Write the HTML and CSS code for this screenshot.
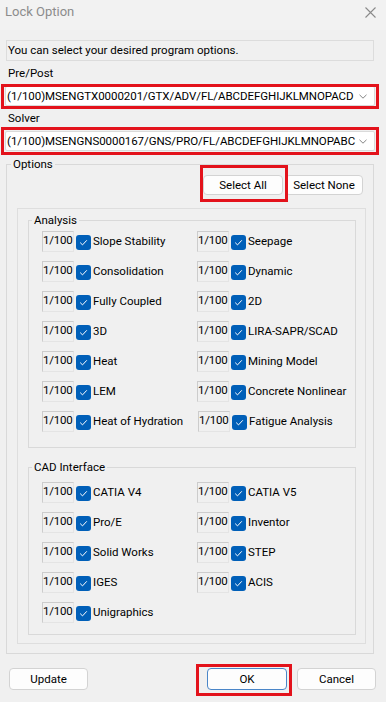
FILE: index.html
```html
<!DOCTYPE html>
<html lang="en">
<head>
<meta charset="utf-8">
<title>Lock Option</title>
<link rel="stylesheet" href="styles.css">
</head>
<body>
<div class="titlebar">
  <span class="title">Lock Option</span>
  <svg class="close" width="11" height="11" viewBox="0 0 11 11"><path d="M0.5 0.5 L10.5 10.5 M10.5 0.5 L0.5 10.5" stroke="#8a8a8a" stroke-width="1.1" fill="none"/></svg>
</div>
<div class="main">
  <div class="info">You can select your desired program options.</div>
  <div class="field-label">Pre/Post</div>
  <div class="combo mark mark-combo1">
    <span class="combo-text">(1/100)MSENGTX0000201/GTX/ADV/FL/ABCDEFGHIJKLMNOPACD</span>
    <svg class="chev" width="8" height="5" viewBox="0 0 8 5"><path d="M0.5 0.8 L4 4.2 L7.5 0.8" stroke="#777" stroke-width="0.9" fill="none"/></svg>
  </div>
  <div class="field-label">Solver</div>
  <div class="combo mark mark-combo2">
    <span class="combo-text">(1/100)MSENGNS0000167/GNS/PRO/FL/ABCDEFGHIJKLMNOPABC</span>
    <svg class="chev" width="8" height="5" viewBox="0 0 8 5"><path d="M0.5 0.8 L4 4.2 L7.5 0.8" stroke="#777" stroke-width="0.9" fill="none"/></svg>
  </div>
  <fieldset class="options">
    <legend>Options</legend>
    <div class="select-row">
      <button class="btn btn-all mark mark-select">Select All</button>
      <button class="btn btn-none">Select None</button>
    </div>
    <div class="panel">
      <fieldset class="group analysis">
        <legend>Analysis</legend>
        <div class="grid">
          <div class="item"><span class="count">1/100</span><svg class="check" viewBox="0 0 15 15"><rect width="15" height="15" rx="3" fill="#005fb8"/><path d="M4.2 7.6 L6.5 9.9 L10.8 5.3" stroke="#fff" stroke-width="1" fill="none"/></svg><span class="item-label">Slope Stability</span></div>
          <div class="item"><span class="count">1/100</span><svg class="check" viewBox="0 0 15 15"><rect width="15" height="15" rx="3" fill="#005fb8"/><path d="M4.2 7.6 L6.5 9.9 L10.8 5.3" stroke="#fff" stroke-width="1" fill="none"/></svg><span class="item-label">Seepage</span></div>
          <div class="item"><span class="count">1/100</span><svg class="check" viewBox="0 0 15 15"><rect width="15" height="15" rx="3" fill="#005fb8"/><path d="M4.2 7.6 L6.5 9.9 L10.8 5.3" stroke="#fff" stroke-width="1" fill="none"/></svg><span class="item-label">Consolidation</span></div>
          <div class="item"><span class="count">1/100</span><svg class="check" viewBox="0 0 15 15"><rect width="15" height="15" rx="3" fill="#005fb8"/><path d="M4.2 7.6 L6.5 9.9 L10.8 5.3" stroke="#fff" stroke-width="1" fill="none"/></svg><span class="item-label">Dynamic</span></div>
          <div class="item"><span class="count">1/100</span><svg class="check" viewBox="0 0 15 15"><rect width="15" height="15" rx="3" fill="#005fb8"/><path d="M4.2 7.6 L6.5 9.9 L10.8 5.3" stroke="#fff" stroke-width="1" fill="none"/></svg><span class="item-label">Fully Coupled</span></div>
          <div class="item"><span class="count">1/100</span><svg class="check" viewBox="0 0 15 15"><rect width="15" height="15" rx="3" fill="#005fb8"/><path d="M4.2 7.6 L6.5 9.9 L10.8 5.3" stroke="#fff" stroke-width="1" fill="none"/></svg><span class="item-label">2D</span></div>
          <div class="item"><span class="count">1/100</span><svg class="check" viewBox="0 0 15 15"><rect width="15" height="15" rx="3" fill="#005fb8"/><path d="M4.2 7.6 L6.5 9.9 L10.8 5.3" stroke="#fff" stroke-width="1" fill="none"/></svg><span class="item-label">3D</span></div>
          <div class="item"><span class="count">1/100</span><svg class="check" viewBox="0 0 15 15"><rect width="15" height="15" rx="3" fill="#005fb8"/><path d="M4.2 7.6 L6.5 9.9 L10.8 5.3" stroke="#fff" stroke-width="1" fill="none"/></svg><span class="item-label">LIRA-SAPR/SCAD</span></div>
          <div class="item"><span class="count">1/100</span><svg class="check" viewBox="0 0 15 15"><rect width="15" height="15" rx="3" fill="#005fb8"/><path d="M4.2 7.6 L6.5 9.9 L10.8 5.3" stroke="#fff" stroke-width="1" fill="none"/></svg><span class="item-label">Heat</span></div>
          <div class="item"><span class="count">1/100</span><svg class="check" viewBox="0 0 15 15"><rect width="15" height="15" rx="3" fill="#005fb8"/><path d="M4.2 7.6 L6.5 9.9 L10.8 5.3" stroke="#fff" stroke-width="1" fill="none"/></svg><span class="item-label">Mining Model</span></div>
          <div class="item"><span class="count">1/100</span><svg class="check" viewBox="0 0 15 15"><rect width="15" height="15" rx="3" fill="#005fb8"/><path d="M4.2 7.6 L6.5 9.9 L10.8 5.3" stroke="#fff" stroke-width="1" fill="none"/></svg><span class="item-label">LEM</span></div>
          <div class="item"><span class="count">1/100</span><svg class="check" viewBox="0 0 15 15"><rect width="15" height="15" rx="3" fill="#005fb8"/><path d="M4.2 7.6 L6.5 9.9 L10.8 5.3" stroke="#fff" stroke-width="1" fill="none"/></svg><span class="item-label">Concrete Nonlinear</span></div>
          <div class="item"><span class="count">1/100</span><svg class="check" viewBox="0 0 15 15"><rect width="15" height="15" rx="3" fill="#005fb8"/><path d="M4.2 7.6 L6.5 9.9 L10.8 5.3" stroke="#fff" stroke-width="1" fill="none"/></svg><span class="item-label">Heat of Hydration</span></div>
          <div class="item item-shift"><span class="count">1/100</span><svg class="check" viewBox="0 0 15 15"><rect width="15" height="15" rx="3" fill="#005fb8"/><path d="M4.2 7.6 L6.5 9.9 L10.8 5.3" stroke="#fff" stroke-width="1" fill="none"/></svg><span class="item-label">Fatigue Analysis</span></div>
        </div>
      </fieldset>
      <fieldset class="group cad">
        <legend>CAD Interface</legend>
        <div class="grid">
          <div class="item"><span class="count">1/100</span><svg class="check" viewBox="0 0 15 15"><rect width="15" height="15" rx="3" fill="#005fb8"/><path d="M4.2 7.6 L6.5 9.9 L10.8 5.3" stroke="#fff" stroke-width="1" fill="none"/></svg><span class="item-label">CATIA V4</span></div>
          <div class="item"><span class="count">1/100</span><svg class="check" viewBox="0 0 15 15"><rect width="15" height="15" rx="3" fill="#005fb8"/><path d="M4.2 7.6 L6.5 9.9 L10.8 5.3" stroke="#fff" stroke-width="1" fill="none"/></svg><span class="item-label">CATIA V5</span></div>
          <div class="item"><span class="count">1/100</span><svg class="check" viewBox="0 0 15 15"><rect width="15" height="15" rx="3" fill="#005fb8"/><path d="M4.2 7.6 L6.5 9.9 L10.8 5.3" stroke="#fff" stroke-width="1" fill="none"/></svg><span class="item-label">Pro/E</span></div>
          <div class="item"><span class="count">1/100</span><svg class="check" viewBox="0 0 15 15"><rect width="15" height="15" rx="3" fill="#005fb8"/><path d="M4.2 7.6 L6.5 9.9 L10.8 5.3" stroke="#fff" stroke-width="1" fill="none"/></svg><span class="item-label">Inventor</span></div>
          <div class="item"><span class="count">1/100</span><svg class="check" viewBox="0 0 15 15"><rect width="15" height="15" rx="3" fill="#005fb8"/><path d="M4.2 7.6 L6.5 9.9 L10.8 5.3" stroke="#fff" stroke-width="1" fill="none"/></svg><span class="item-label">Solid Works</span></div>
          <div class="item"><span class="count">1/100</span><svg class="check" viewBox="0 0 15 15"><rect width="15" height="15" rx="3" fill="#005fb8"/><path d="M4.2 7.6 L6.5 9.9 L10.8 5.3" stroke="#fff" stroke-width="1" fill="none"/></svg><span class="item-label">STEP</span></div>
          <div class="item"><span class="count">1/100</span><svg class="check" viewBox="0 0 15 15"><rect width="15" height="15" rx="3" fill="#005fb8"/><path d="M4.2 7.6 L6.5 9.9 L10.8 5.3" stroke="#fff" stroke-width="1" fill="none"/></svg><span class="item-label">IGES</span></div>
          <div class="item"><span class="count">1/100</span><svg class="check" viewBox="0 0 15 15"><rect width="15" height="15" rx="3" fill="#005fb8"/><path d="M4.2 7.6 L6.5 9.9 L10.8 5.3" stroke="#fff" stroke-width="1" fill="none"/></svg><span class="item-label">ACIS</span></div>
          <div class="item"><span class="count">1/100</span><svg class="check" viewBox="0 0 15 15"><rect width="15" height="15" rx="3" fill="#005fb8"/><path d="M4.2 7.6 L6.5 9.9 L10.8 5.3" stroke="#fff" stroke-width="1" fill="none"/></svg><span class="item-label">Unigraphics</span></div>
        </div>
      </fieldset>
    </div>
  </fieldset>
</div>
<div class="footer">
  <button class="btn btn-update">Update</button>
  <button class="btn btn-ok mark mark-ok">OK</button>
  <button class="btn btn-cancel">Cancel</button>
</div>
</body>
</html>
```

FILE: styles.css
```css
* { box-sizing: border-box; }
html, body { margin: 0; padding: 0; }
body {
  width: 386px;
  height: 702px;
  overflow: hidden;
  background: #f0f0f0;
  font-family: Roboto, "Noto Sans", sans-serif;
  font-size: 11.5px;
  color: #000;
}

.titlebar {
  height: 30px;
  display: flex;
  justify-content: space-between;
  align-items: flex-start;
  padding: 4px 10px 0 5px;
  background: #f2f2f2;
}
.title { font-size: 13px; line-height: 16px; color: #8c8c8c; }
.close { margin-top: 3px; }

.main { padding: 0 12px 0 6px; }

.info {
  margin-top: 10px;
  height: 21px;
  border: 1px solid #dcdcdc;
  padding-left: 1px;
  line-height: 19px;
}

.field-label { padding-left: 2px; line-height: 16px; margin-top: 4px; }

.combo {
  margin: 5px -1px 0;
  height: 20px;
  background: #fff;
  border: 1px solid #dadada;
  border-radius: 2px;
  display: flex;
  align-items: center;
  justify-content: space-between;
  padding: 0 7px 0 1px;
  white-space: nowrap;
}
.combo-text { line-height: 18px; letter-spacing: -0.06px; }
.chev { flex: none; }

.mark { position: relative; }
.mark::after {
  content: "";
  position: absolute;
  border: 3px solid #e3121b;
  pointer-events: none;
}
.mark-combo1::after { left: -5px; right: -5px; top: -3px; bottom: -4px; }
.mark-combo2::after { left: -5px; right: -5px; top: -5px; bottom: -5px; }
.mark-select::after { left: -4px; right: -6px; top: -11px; bottom: -8px; }
.mark-ok::after { left: -12px; right: -6px; top: -5px; bottom: -7px; }

fieldset { margin: 0; min-width: 0; }
legend { padding: 0 2px; line-height: 16px; font-size: 11.5px; }

.options {
  margin-top: 5px;
  border: 1px solid #d9d9d9;
  padding: 3px 7px 9px 10px;
}
.options > legend { margin-left: -6px; }

.select-row {
  display: flex;
  justify-content: flex-end;
  gap: 2px;
  padding-right: 3px;
}

.btn {
  font-family: inherit;
  font-size: 11.5px;
  color: #000;
  background: #fdfdfd;
  border: 1px solid #d3d3d3;
  border-radius: 4px;
  padding: 0;
  height: 20px;
}
.btn-all { width: 80px; }
.btn-none { width: 78px; }

.panel {
  margin-top: 13px;
  border: 1px solid #dedede;
  padding: 3px 9px 8px 10px;
}

.group {
  border: 1px solid #d9d9d9;
  padding: 3px 0 15px 13px;
}
.group > legend { margin-left: -10px; }
.cad { margin-top: 11px; padding-top: 7px; padding-bottom: 11px; }

.grid {
  display: grid;
  grid-template-columns: 155px 1fr;
  row-gap: 9px;
}
.item { display: flex; align-items: flex-start; height: 21px; white-space: nowrap; }
.item-shift { padding-left: 1px; }
.count {
  width: 32px;
  height: 21px;
  border: 1px solid #cccccc;
  border-right-color: #e4e4e4;
  border-bottom-color: #e4e4e4;
  line-height: 17px;
  letter-spacing: -0.25px;
  padding-left: 0;
  overflow: hidden;
}
.check { width: 15px; height: 15px; margin: 4px 2px 0 2px; flex: none; }
.item-label { line-height: 21px; }

.footer {
  display: flex;
  margin-top: 14px;
  padding: 0 10px 0 9px;
  gap: 10px;
}
.btn-update { width: 79px; height: 22px; margin-right: auto; }
.btn-ok { width: 80px; height: 22px; border-color: #4a86c8; }
.btn-cancel { width: 79px; height: 22px; }
```
